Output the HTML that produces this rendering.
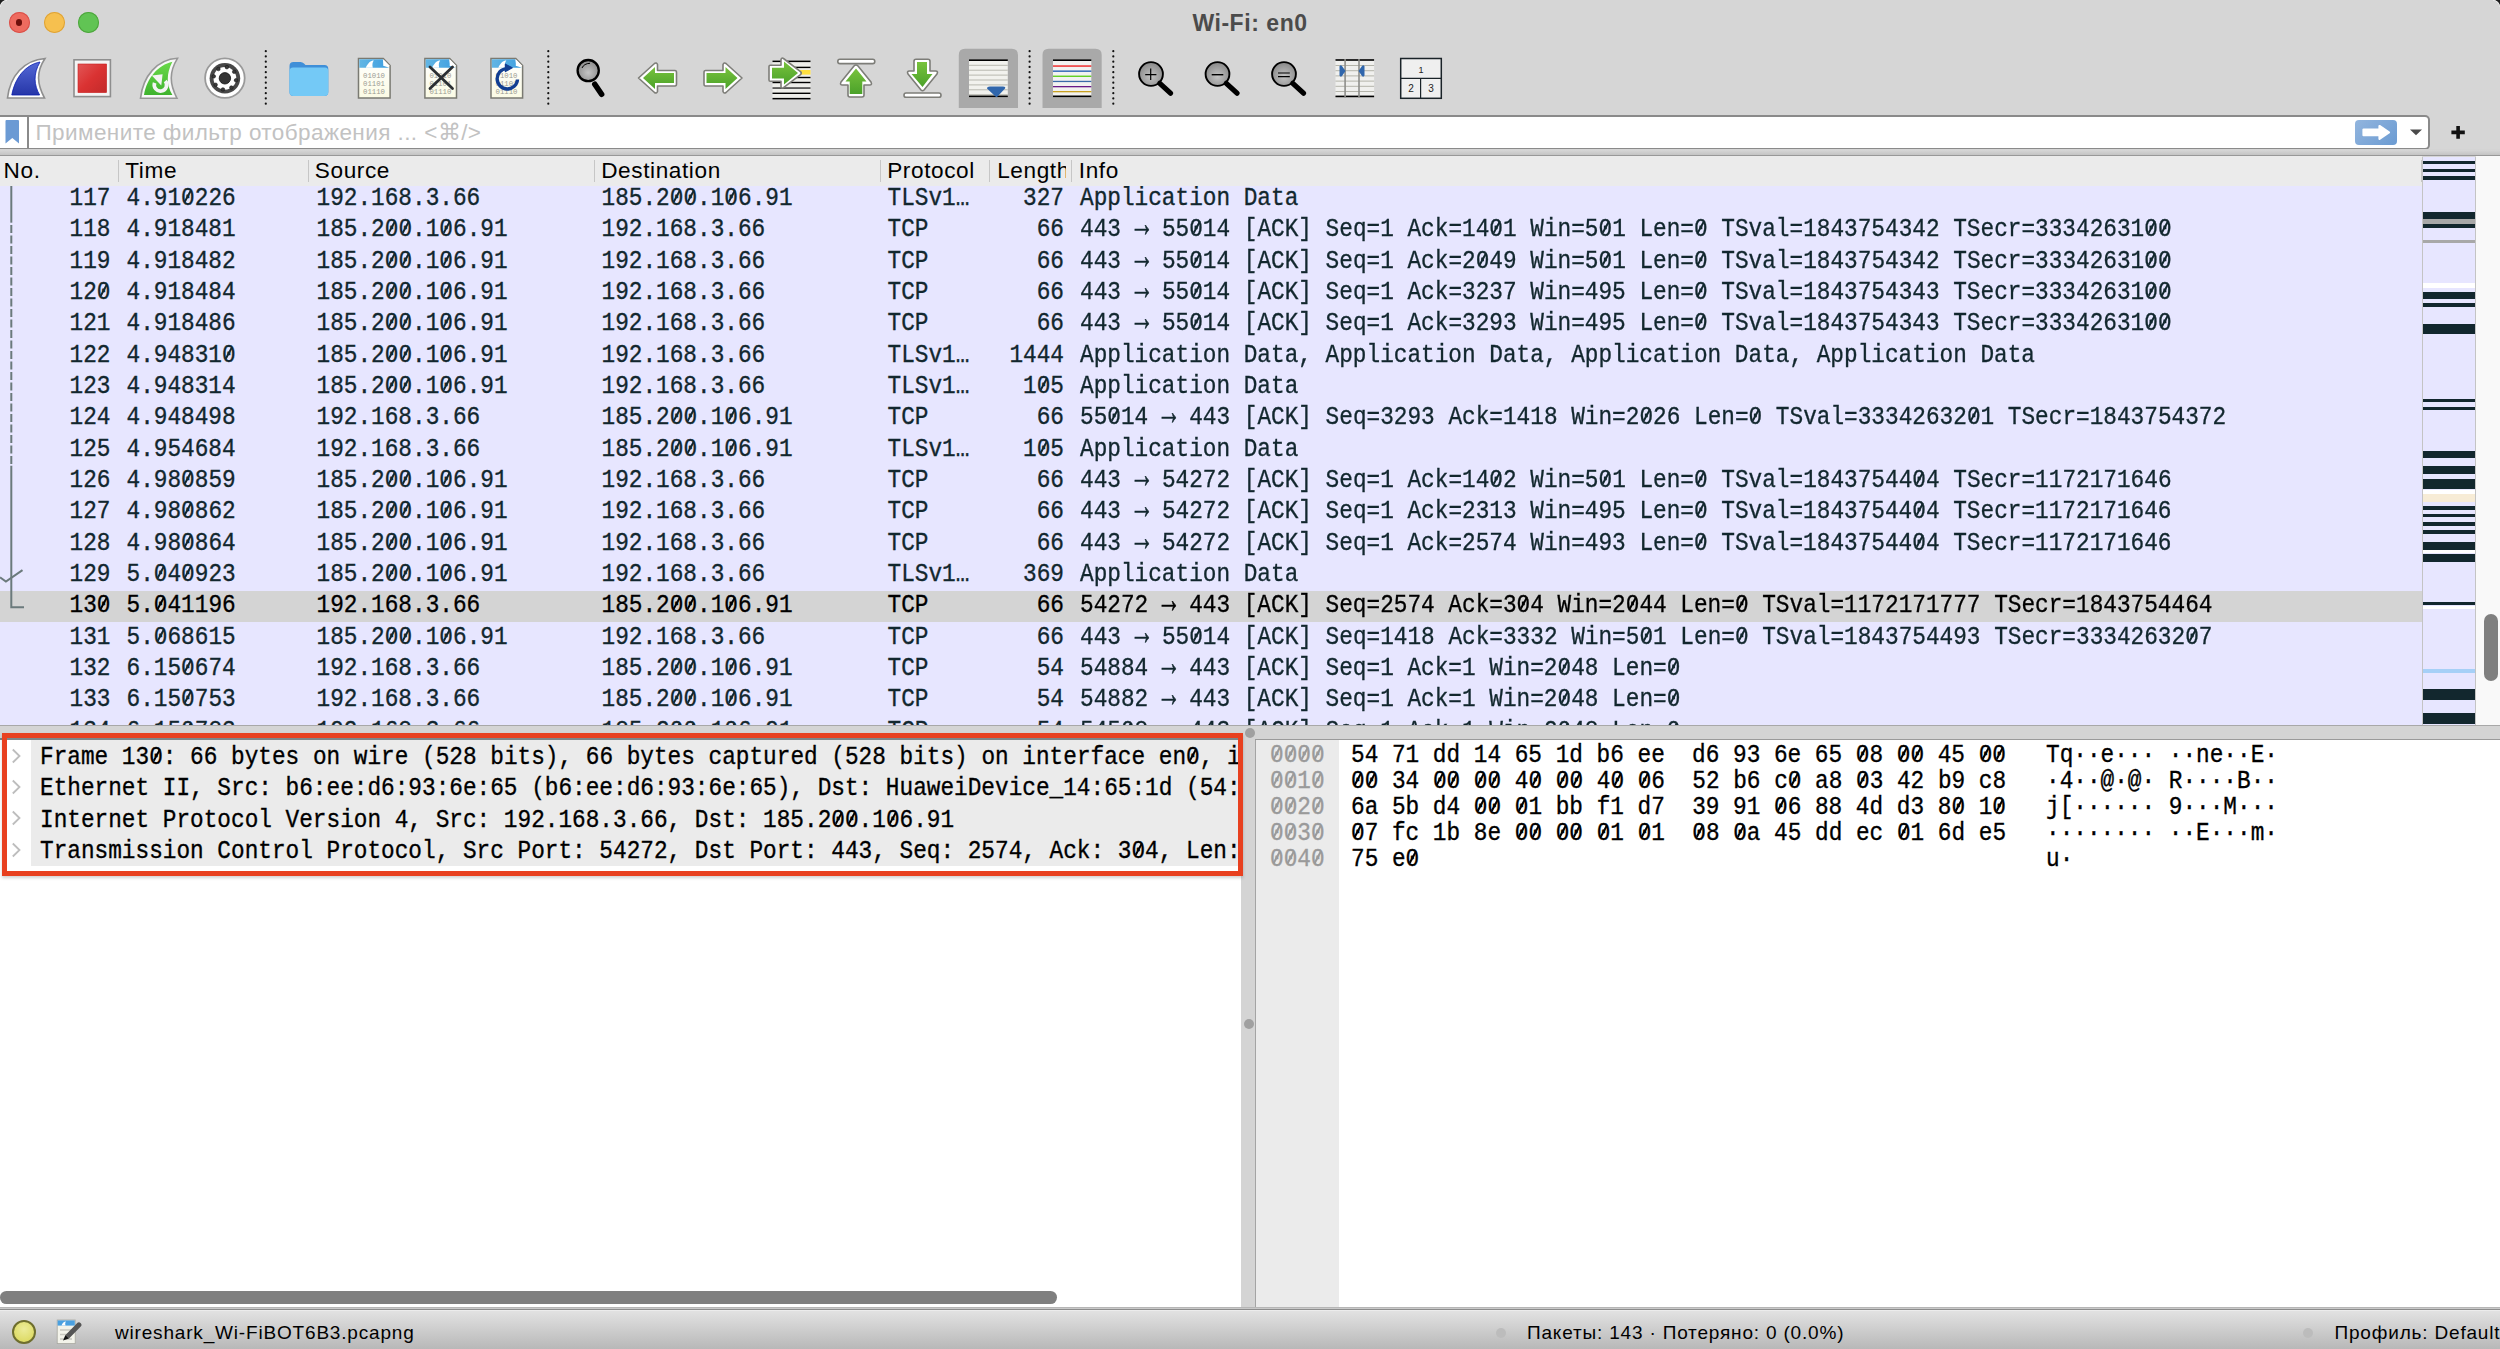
<!DOCTYPE html>
<html><head><meta charset="utf-8">
<style>
*{margin:0;padding:0;box-sizing:border-box}
html,body{width:2500px;height:1349px;overflow:hidden;background:#d6d6d6}
body{position:relative;font-family:"Liberation Sans",sans-serif}
.a{position:absolute}
.m{position:absolute;font-family:"Liberation Mono",monospace;font-size:22.74px;line-height:31px;white-space:pre;color:#12272e;transform:scaleY(1.12);transform-origin:0 21.6px;-webkit-text-stroke:0.3px currentColor}
.hx{line-height:26px;transform-origin:0 19px}
.z{position:relative}
.z::after{content:'';position:absolute;left:6.35px;top:5.4px;width:1.9px;height:11.6px;background:currentColor;transform:rotate(31deg)}
.ar{display:inline-block;transform:translateY(-2.5px) scale(1.05,1.5)}
.h{position:absolute;font-family:"Liberation Sans",sans-serif;font-size:22.6px;line-height:28px;white-space:pre;color:#000;letter-spacing:0.6px}
.sep{position:absolute;top:160px;width:1px;height:22px;background:#c6c6c6}
</style></head><body>

<div class="a" style="left:0;top:0;width:2500px;height:115px;background:#d6d6d6"></div>
<svg class="a" style="left:0;top:0" width="12" height="12"><path d="M0 0 H7 A7 7 0 0 0 0 7 Z" fill="#1e1e1e"/><path d="M7 0.3 A6.7 6.7 0 0 0 0.3 7" fill="none" stroke="#efefef" stroke-width="0.9"/></svg>
<svg class="a" style="left:2488px;top:0" width="12" height="12"><path d="M12 0 H5 A7 7 0 0 1 12 7 Z" fill="#1e1e1e"/><path d="M5 0.3 A6.7 6.7 0 0 1 11.7 7" fill="none" stroke="#efefef" stroke-width="0.9"/></svg>
<div class="a" style="left:1151px;top:7.7px;width:198px;text-align:center;font-weight:bold;font-size:23px;letter-spacing:0.55px;line-height:30px;color:#4b4b4b">Wi-Fi: en0</div>
<div class="a" style="left:8.8px;top:12.2px;width:21px;height:21px;border-radius:50%;background:#ee6b5f;box-shadow:inset 0 0 0 1px #d9504a"></div>
<div class="a" style="left:43.7px;top:12.2px;width:21px;height:21px;border-radius:50%;background:#f6c04f;box-shadow:inset 0 0 0 1px #dea236"></div>
<div class="a" style="left:78.4px;top:12.2px;width:21px;height:21px;border-radius:50%;background:#61c454;box-shadow:inset 0 0 0 1px #4ea43d"></div>
<div class="a" style="left:16px;top:19.2px;width:6.4px;height:6.4px;border-radius:50%;background:#6e100b"></div>
<svg class="a" style="left:0;top:0" width="1460" height="115" viewBox="0 0 1460 115">
<defs>
<linearGradient id="gBlue" x1="0" y1="0" x2="0" y2="1"><stop offset="0" stop-color="#5468d6"/><stop offset="1" stop-color="#2636a8"/></linearGradient>
<linearGradient id="gRed" x1="0" y1="0" x2="1" y2="1"><stop offset="0" stop-color="#e25656"/><stop offset="0.5" stop-color="#da3232"/><stop offset="1" stop-color="#c22a2a"/></linearGradient>
<linearGradient id="gGreen" x1="0" y1="0" x2="0" y2="1"><stop offset="0" stop-color="#6ad94a"/><stop offset="1" stop-color="#3fb32e"/></linearGradient>
<linearGradient id="gArrow" x1="0" y1="0" x2="0" y2="1"><stop offset="0" stop-color="#78c23c"/><stop offset="1" stop-color="#4ba22a"/></linearGradient>
<radialGradient id="gLens" cx="0.5" cy="0.6" r="0.6"><stop offset="0" stop-color="#c4c4c4"/><stop offset="1" stop-color="#888"/></radialGradient>
<linearGradient id="gFile" x1="0" y1="0" x2="0" y2="1"><stop offset="0" stop-color="#ffffff"/><stop offset="1" stop-color="#fbfbe4"/></linearGradient>
<linearGradient id="gBand" x1="0" y1="0" x2="1" y2="0"><stop offset="0" stop-color="#62b6e4"/><stop offset="1" stop-color="#3d9ee0"/></linearGradient>
</defs>
<path d="M7.5 98 C10 76 24 60 45 58.5 C36 72 37 84 44.5 98 Z" fill="#fff" stroke="#8e8e8e" stroke-width="1.6"/>
<path d="M11.8 95 C15 78 25 65 40 62 C33 74 34 85 39.6 95 Z" fill="url(#gBlue)" stroke="#0b1fb0" stroke-width="0.8"/>
<rect x="74" y="59.8" width="36.4" height="36.8" fill="#f4f4f4" stroke="#8e8e8e" stroke-width="1.6"/>
<rect x="78" y="64" width="28.6" height="28.6" fill="url(#gRed)" stroke="#c82020" stroke-width="0.6"/>
<path d="M140.5 98.3 C143 76 157 59.5 177.5 58.3 C169 72 169.5 84 177 98.3 Z" fill="#f8f8f8" stroke="#979797" stroke-width="1.6"/>
<path d="M144 95 C147 78 158 65 172.4 61.8 C166 74 166.5 85 172.4 95 Z" fill="url(#gGreen)"/>
<path d="M154.6 82.8 A6.2 6.2 0 1 0 165.3 81" fill="none" stroke="#f4f4f4" stroke-width="3.7"/>
<path d="M151.8 75.5 L162.6 74.2 L161.3 85.5 Z" fill="#f4f4f4"/>
<circle cx="224.9" cy="78.1" r="19.8" fill="#fff" stroke="#9a9a9a" stroke-width="1.8"/>
<circle cx="224.9" cy="78.3" r="15.3" fill="#474747"/>
<circle cx="224.90" cy="78.30" r="11.4" fill="#fff"/>
<circle cx="226.86" cy="67.17" r="1.8" fill="#3a3a3a" stroke="#111" stroke-width="0.5"/>
<circle cx="234.16" cy="71.82" r="1.8" fill="#3a3a3a" stroke="#111" stroke-width="0.5"/>
<circle cx="236.03" cy="80.26" r="1.8" fill="#3a3a3a" stroke="#111" stroke-width="0.5"/>
<circle cx="231.38" cy="87.56" r="1.8" fill="#3a3a3a" stroke="#111" stroke-width="0.5"/>
<circle cx="222.94" cy="89.43" r="1.8" fill="#3a3a3a" stroke="#111" stroke-width="0.5"/>
<circle cx="215.64" cy="84.78" r="1.8" fill="#3a3a3a" stroke="#111" stroke-width="0.5"/>
<circle cx="213.77" cy="76.34" r="1.8" fill="#3a3a3a" stroke="#111" stroke-width="0.5"/>
<circle cx="218.42" cy="69.04" r="1.8" fill="#3a3a3a" stroke="#111" stroke-width="0.5"/>
<circle cx="224.9" cy="78.3" r="5.7" fill="#353535" stroke="#111" stroke-width="0.8"/>
<circle cx="265.8" cy="51.20" r="1.1" fill="#111"/>
<circle cx="265.8" cy="56.45" r="1.1" fill="#111"/>
<circle cx="265.8" cy="61.70" r="1.1" fill="#111"/>
<circle cx="265.8" cy="66.95" r="1.1" fill="#111"/>
<circle cx="265.8" cy="72.20" r="1.1" fill="#111"/>
<circle cx="265.8" cy="77.45" r="1.1" fill="#111"/>
<circle cx="265.8" cy="82.70" r="1.1" fill="#111"/>
<circle cx="265.8" cy="87.95" r="1.1" fill="#111"/>
<circle cx="265.8" cy="93.20" r="1.1" fill="#111"/>
<circle cx="265.8" cy="98.45" r="1.1" fill="#111"/>
<circle cx="265.8" cy="103.70" r="1.1" fill="#111"/>
<circle cx="548.3" cy="51.20" r="1.1" fill="#111"/>
<circle cx="548.3" cy="56.45" r="1.1" fill="#111"/>
<circle cx="548.3" cy="61.70" r="1.1" fill="#111"/>
<circle cx="548.3" cy="66.95" r="1.1" fill="#111"/>
<circle cx="548.3" cy="72.20" r="1.1" fill="#111"/>
<circle cx="548.3" cy="77.45" r="1.1" fill="#111"/>
<circle cx="548.3" cy="82.70" r="1.1" fill="#111"/>
<circle cx="548.3" cy="87.95" r="1.1" fill="#111"/>
<circle cx="548.3" cy="93.20" r="1.1" fill="#111"/>
<circle cx="548.3" cy="98.45" r="1.1" fill="#111"/>
<circle cx="548.3" cy="103.70" r="1.1" fill="#111"/>
<circle cx="1029.6" cy="51.20" r="1.1" fill="#111"/>
<circle cx="1029.6" cy="56.45" r="1.1" fill="#111"/>
<circle cx="1029.6" cy="61.70" r="1.1" fill="#111"/>
<circle cx="1029.6" cy="66.95" r="1.1" fill="#111"/>
<circle cx="1029.6" cy="72.20" r="1.1" fill="#111"/>
<circle cx="1029.6" cy="77.45" r="1.1" fill="#111"/>
<circle cx="1029.6" cy="82.70" r="1.1" fill="#111"/>
<circle cx="1029.6" cy="87.95" r="1.1" fill="#111"/>
<circle cx="1029.6" cy="93.20" r="1.1" fill="#111"/>
<circle cx="1029.6" cy="98.45" r="1.1" fill="#111"/>
<circle cx="1029.6" cy="103.70" r="1.1" fill="#111"/>
<circle cx="1113.3" cy="51.20" r="1.1" fill="#111"/>
<circle cx="1113.3" cy="56.45" r="1.1" fill="#111"/>
<circle cx="1113.3" cy="61.70" r="1.1" fill="#111"/>
<circle cx="1113.3" cy="66.95" r="1.1" fill="#111"/>
<circle cx="1113.3" cy="72.20" r="1.1" fill="#111"/>
<circle cx="1113.3" cy="77.45" r="1.1" fill="#111"/>
<circle cx="1113.3" cy="82.70" r="1.1" fill="#111"/>
<circle cx="1113.3" cy="87.95" r="1.1" fill="#111"/>
<circle cx="1113.3" cy="93.20" r="1.1" fill="#111"/>
<circle cx="1113.3" cy="98.45" r="1.1" fill="#111"/>
<circle cx="1113.3" cy="103.70" r="1.1" fill="#111"/>
<path d="M289.5 66 Q289.5 62 293.5 62 L300.5 62 Q302.5 62 304 63.5 L305.5 65 L324.5 65 Q328.3 65 328.3 69 L328.3 92 Q328.3 96 324.3 96 L293.5 96 Q289.5 96 289.5 92 Z" fill="#3f8fd8"/>
<path d="M289.5 71 Q289.5 67.5 293 67.5 L325 67.5 Q328.3 67.5 328.3 71 L328.3 92 Q328.3 96 324.3 96 L293.5 96 Q289.5 96 289.5 92 Z" fill="#74c9f6"/>
<path d="M358.5 58.5 L383.3 58.5 L390.1 65.5 L390.1 98 L358.5 98 Z" fill="url(#gFile)" stroke="#7a7a72" stroke-width="1.5"/><path d="M359.3 59.3 L382.8 59.3 L384.0 66 L389.3 67.8 L359.3 67.8 Z" fill="url(#gBand)"/><path d="M365.8 67.8 C367.8 63 370.8 60.5 373.8 60.5 C372.3 62.5 372.1 65 372.8 67.8 Z" fill="#fff"/><path d="M383.3 59.2 L389.9 66 L383.3 66 Z" fill="#fff"/><text x="363.0" y="78.3" font-family="Liberation Mono" font-size="7.3" fill="#9a9a92">01010</text><text x="363.0" y="86.1" font-family="Liberation Mono" font-size="7.3" fill="#9a9a92">01101</text><text x="363.0" y="93.9" font-family="Liberation Mono" font-size="7.3" fill="#9a9a92">01110</text>
<path d="M424.9 58.5 L449.7 58.5 L456.5 65.5 L456.5 98 L424.9 98 Z" fill="url(#gFile)" stroke="#7a7a72" stroke-width="1.5"/><path d="M425.7 59.3 L449.2 59.3 L450.4 66 L455.7 67.8 L425.7 67.8 Z" fill="url(#gBand)"/><path d="M432.2 67.8 C434.2 63 437.2 60.5 440.2 60.5 C438.7 62.5 438.5 65 439.2 67.8 Z" fill="#fff"/><path d="M449.7 59.2 L456.3 66 L449.7 66 Z" fill="#fff"/><text x="429.4" y="78.3" font-family="Liberation Mono" font-size="7.3" fill="#9a9a92">01010</text><text x="429.4" y="86.1" font-family="Liberation Mono" font-size="7.3" fill="#9a9a92">01101</text><text x="429.4" y="93.9" font-family="Liberation Mono" font-size="7.3" fill="#9a9a92">01110</text>
<path d="M430 67 L452.5 88.5 M452.5 67 L430 88.5" stroke="#2b2f33" stroke-width="2.8" stroke-linecap="round"/>
<path d="M491.0 58.5 L515.8 58.5 L522.6 65.5 L522.6 98 L491.0 98 Z" fill="url(#gFile)" stroke="#7a7a72" stroke-width="1.5"/><path d="M491.8 59.3 L515.3 59.3 L516.5 66 L521.8 67.8 L491.8 67.8 Z" fill="url(#gBand)"/><path d="M498.3 67.8 C500.3 63 503.3 60.5 506.3 60.5 C504.8 62.5 504.6 65 505.3 67.8 Z" fill="#fff"/><path d="M515.8 59.2 L522.4 66 L515.8 66 Z" fill="#fff"/><text x="495.5" y="78.3" font-family="Liberation Mono" font-size="7.3" fill="#9a9a92">01010</text><text x="495.5" y="86.1" font-family="Liberation Mono" font-size="7.3" fill="#9a9a92">01101</text><text x="495.5" y="93.9" font-family="Liberation Mono" font-size="7.3" fill="#9a9a92">01110</text>
<path d="M506.5 68.6 A10.2 10.2 0 1 0 517.5 79.5" fill="none" stroke="#123f92" stroke-width="3.4"/>
<path d="M505.4 64.2 L512.2 67.8 L505.4 71.6 Z" fill="#123f92" stroke="#123f92" stroke-width="1.2" stroke-linejoin="round"/>
<circle cx="588.2" cy="70.6" r="10.6" fill="url(#gLens)" stroke="#000" stroke-width="2.3"/>
<path d="M582 68 Q584 63.5 590 63.3" fill="none" stroke="#000" stroke-width="1"/>
<path d="M594.8 84.2 L601.6 94.2" stroke="#000" stroke-width="5.6" stroke-linecap="round"/>
<path d="M638.5 78 L654.5 63.5 Q656.5 62 657.5 64.5 L657.5 70.5 L675.0 70.5 Q676.5 70.5 676.5 72.5 L676.5 84 Q676.5 86 675.0 86 L657.5 86 L657.5 91.5 Q656.5 94 654.5 92.5 Z" fill="#fff" stroke="#7d7d78" stroke-width="1.6" stroke-linejoin="round"/><path d="M643.0 78 L655.0 67 L655.0 73 L674.0 73 L674.0 83 L655.0 83 L655.0 89 Z" fill="url(#gArrow)"/>
<g transform="translate(1380.5,0) scale(-1,1)"><path d="M638.5 78 L654.5 63.5 Q656.5 62 657.5 64.5 L657.5 70.5 L675.0 70.5 Q676.5 70.5 676.5 72.5 L676.5 84 Q676.5 86 675.0 86 L657.5 86 L657.5 91.5 Q656.5 94 654.5 92.5 Z" fill="#fff" stroke="#7d7d78" stroke-width="1.6" stroke-linejoin="round"/><path d="M643.0 78 L655.0 67 L655.0 73 L674.0 73 L674.0 83 L655.0 83 L655.0 89 Z" fill="url(#gArrow)"/></g>
<rect x="772.5" y="61" width="38" height="38" fill="#eeeeea"/>
<rect x="772.5" y="60.6" width="38" height="1.5" fill="#000"/>
<rect x="772.5" y="66.7" width="38" height="1.4" fill="#000"/>
<rect x="772.5" y="70.0" width="38" height="4.6" fill="#ffe040"/>
<rect x="772.5" y="76.8" width="38" height="1.4" fill="#000"/>
<rect x="772.5" y="81.8" width="38" height="1.4" fill="#000"/>
<rect x="772.5" y="87.3" width="38" height="1.5" fill="#3a3a3a"/>
<rect x="772.5" y="92.6" width="38" height="1.4" fill="#000"/>
<rect x="772.5" y="97.9" width="38" height="1.5" fill="#000"/>
<path d="M770.2 65.3 L781 65.3 L781 59.5 Q781.5 57.3 783.5 58.5 L800.5 71.6 Q802 73.1 800.5 74.6 L783.5 87.6 Q781.5 88.8 781 86.6 L781 81.3 L770.2 81.3 Q769 81.3 769 80 L769 66.6 Q769 65.3 770.2 65.3 Z" fill="#fff" stroke="#7d7d78" stroke-width="1.6" stroke-linejoin="round"/>
<path d="M772 67.8 L784 67.8 L784 61.6 L798 73.1 L784 84.6 L784 78.6 L772 78.6 Z" fill="url(#gArrow)"/>
<rect x="837.8" y="59.3" width="37" height="4.3" rx="2.1" fill="#fff" stroke="#7d7d78" stroke-width="1.6"/>
<path d="M856 65 Q857 65 858 66 L871 82 Q872.5 85 869.5 85 L864 85 L864 95 Q864 97 862 97 L850 97 Q848 97 848 95 L848 85 L842.5 85 Q839.5 85 841 82 L854 66 Q855 65 856 65 Z" fill="#fff" stroke="#7d7d78" stroke-width="1.6" stroke-linejoin="round"/>
<path d="M856 68.5 L866.5 81.5 L862.3 81.5 L862.3 94 L849.7 94 L849.7 81.5 L845.5 81.5 Z" fill="url(#gArrow)"/>
<rect x="904" y="93" width="37" height="4.3" rx="2.1" fill="#fff" stroke="#7d7d78" stroke-width="1.6"/>
<path d="M916 59.3 L928 59.3 Q930 59.3 930 61.3 L930 71 L935.5 71 Q938.5 71 937 74 L924 90 Q922.5 91.5 921 90 L908 74 Q906.5 71 909.5 71 L914 71 L914 61.3 Q914 59.3 916 59.3 Z" fill="#fff" stroke="#7d7d78" stroke-width="1.6" stroke-linejoin="round"/>
<path d="M917 62 L927 62 L927 74 L932.5 74 L922.5 87 L911.5 74 L917 74 Z" fill="url(#gArrow)"/>
<path d="M958.8 108 L958.8 55 Q958.8 48.8 965.0 48.8 L1011.8 48.8 Q1018.0 48.8 1018.0 55 L1018.0 108 Z" fill="#a9a9a9"/>
<path d="M1042.5 108 L1042.5 55 Q1042.5 48.8 1048.7 48.8 L1095.5 48.8 Q1101.7 48.8 1101.7 55 L1101.7 108 Z" fill="#a9a9a9"/>
<rect x="969" y="60.5" width="38.8" height="35.5" fill="#f2f2ee"/>
<rect x="969" y="64.8" width="38.8" height="1" fill="#b8b8b0"/>
<rect x="969" y="69.7" width="38.8" height="1" fill="#b8b8b0"/>
<rect x="969" y="74.6" width="38.8" height="1" fill="#b8b8b0"/>
<rect x="969" y="79.5" width="38.8" height="1" fill="#b8b8b0"/>
<rect x="969" y="84.4" width="38.8" height="1" fill="#b8b8b0"/>
<rect x="969" y="89.3" width="38.8" height="1" fill="#b8b8b0"/>
<rect x="969" y="94.2" width="38.8" height="1" fill="#b8b8b0"/>
<rect x="969" y="59.4" width="38.8" height="1.6" fill="#000"/>
<rect x="969" y="95.5" width="38.8" height="1.6" fill="#000"/>
<path d="M987 88.5 Q987 86.5 990 86.5 L1003 86.5 Q1006 86.5 1005 88.5 L997.5 96.5 Q996.5 97.5 995.5 96.5 Z" fill="#3066ac"/>
<rect x="1053" y="60.5" width="38.3" height="35.5" fill="#f2f2f0"/>
<rect x="1053" y="59.4" width="38.3" height="1.6" fill="#000"/>
<rect x="1053" y="95.5" width="38.3" height="1.6" fill="#000"/>
<rect x="1053" y="65.4" width="38.3" height="1.3" fill="#ee1111"/>
<rect x="1053" y="70.5" width="38.3" height="1.3" fill="#1a55b0"/>
<rect x="1053" y="75.6" width="38.3" height="1.3" fill="#55cc11"/>
<rect x="1053" y="80.8" width="38.3" height="1.3" fill="#3a6aa8"/>
<rect x="1053" y="86.0" width="38.3" height="1.3" fill="#6a1a88"/>
<rect x="1053" y="91.0" width="38.3" height="1.3" fill="#c8a020"/>
<circle cx="1151.0" cy="74.0" r="11.9" fill="url(#gLens)" stroke="#000" stroke-width="1.9"/><path d="M1159.8 83.3 L1170.5 93.2" stroke="#000" stroke-width="5.2" stroke-linecap="round"/><path d="M1145.2 74.7 H1156.4 M1150.7 68.4 V80.0" stroke="#000" stroke-width="1.2"/>
<circle cx="1217.5" cy="74.0" r="11.9" fill="url(#gLens)" stroke="#000" stroke-width="1.9"/><path d="M1226.3 83.3 L1237.0 93.2" stroke="#000" stroke-width="5.2" stroke-linecap="round"/><path d="M1211.7 74.7 H1223.3" stroke="#000" stroke-width="1.4"/>
<circle cx="1284.0" cy="74.0" r="11.9" fill="url(#gLens)" stroke="#000" stroke-width="1.9"/><path d="M1292.8 83.3 L1303.5 93.2" stroke="#000" stroke-width="5.2" stroke-linecap="round"/><path d="M1278.0 73.0 H1289.8 M1278.0 76.6 H1289.8" stroke="#000" stroke-width="1.2"/>
<rect x="1335.5" y="60" width="38.6" height="36" fill="#f0f0ee"/>
<rect x="1335.5" y="65.0" width="38.6" height="1" fill="#b4b4aa"/>
<rect x="1335.5" y="70.2" width="38.6" height="1" fill="#b4b4aa"/>
<rect x="1335.5" y="75.4" width="38.6" height="1" fill="#b4b4aa"/>
<rect x="1335.5" y="80.6" width="38.6" height="1" fill="#b4b4aa"/>
<rect x="1335.5" y="85.8" width="38.6" height="1" fill="#b4b4aa"/>
<rect x="1335.5" y="91.0" width="38.6" height="1" fill="#b4b4aa"/>
<rect x="1335.5" y="96.2" width="38.6" height="1" fill="#b4b4aa"/>
<rect x="1335.5" y="59.2" width="38.6" height="1.6" fill="#000"/>
<rect x="1335.5" y="95.6" width="38.6" height="1.6" fill="#000"/>
<rect x="1344.3" y="59" width="1.6" height="38.5" fill="#8e8e8a"/>
<rect x="1358.2" y="59" width="1.6" height="38.5" fill="#8e8e8a"/>
<path d="M1339.5 66.5 Q1340.5 64.5 1342 66 L1345.5 71 L1342 76 Q1340.5 77.5 1339.5 75.5 Z" fill="#3066ac"/>
<path d="M1364.5 66.5 Q1363.5 64.5 1362 66 L1358.5 71 L1362 76 Q1363.5 77.5 1364.5 75.5 Z" fill="#3066ac"/>
<rect x="1400.7" y="58.5" width="40.6" height="39.8" fill="#efefef" stroke="#1a2328" stroke-width="1.5"/>
<path d="M1400.7 78.3 H1441.3 M1420.6 78.3 V98.3" stroke="#1a2328" stroke-width="1.2"/>
<text x="1421" y="72.5" font-family="Liberation Sans" font-size="9" fill="#222" text-anchor="middle">1</text>
<text x="1411" y="92" font-family="Liberation Sans" font-size="10" fill="#222" text-anchor="middle">2</text>
<text x="1431" y="92" font-family="Liberation Sans" font-size="10" fill="#222" text-anchor="middle">3</text>
</svg>
<div class="a" style="left:0;top:114.8px;width:2430px;height:35.3px;background:#fff;border:2px solid #8a8a8a;border-left:none;border-radius:0 5px 5px 0"></div>
<div class="a" style="left:27px;top:116px;width:2px;height:32px;background:#8a8a8a"></div>
<svg class="a" style="left:0;top:115px" width="30" height="34"><path d="M5.5 6 Q5.5 5 6.5 5 L18 5 Q19 5 19 6 L19 28.5 L12.3 23 L5.5 28.5 Z" fill="#6b9ad4"/></svg>
<div class="a" style="left:35.5px;top:118px;font-size:22.5px;letter-spacing:0.42px;line-height:30px;color:#c2c2c2;white-space:pre">Примените фильтр отображения ... &lt;⌘/&gt;</div>
<div class="a" style="left:2355px;top:120px;width:42px;height:24.6px;border-radius:4px;background:linear-gradient(135deg,#92b5de,#6b9bd2)"></div>
<svg class="a" style="left:2355px;top:120px" width="42" height="25"><path d="M8.5 9.6 H24.5 V6 L34 12.4 L24.5 18.8 V15.2 H8.5 Z" fill="#fff" stroke="#fff" stroke-width="2.2" stroke-linejoin="round"/></svg>
<svg class="a" style="left:2408px;top:127px" width="16" height="10"><path d="M2 2.5 H14 L8 8.3 Z" fill="#4a4a4a"/></svg>
<svg class="a" style="left:2448px;top:124px" width="20" height="18"><path d="M3.4 8.4 H16.8 M10.1 2 V14.8" stroke="#111" stroke-width="3.6"/></svg>
<div class="a" style="left:0;top:149px;width:2500px;height:6px;background:#d4d4d4"></div>
<div class="a" style="left:0;top:150px;width:2500px;height:5px;background:linear-gradient(#d6d6d6,#c4c4c4)"></div>
<div class="a" style="left:0;top:154.8px;width:2500px;height:1.3px;background:#989898"></div>
<div class="a" style="left:0;top:155px;width:2422px;height:570px;background:#e7e6ff;overflow:hidden">
<div class="a" style="left:0;top:436.29px;width:2422px;height:31px;background:#d4d4d4"></div>
<div class="m" style="top:29.00px;color:#12272e;left:0;width:110.5px;text-align:right">117</div>
<div class="m" style="top:29.00px;color:#12272e;left:126.5px">4.91<span class="z">0</span>226</div>
<div class="m" style="top:29.00px;color:#12272e;left:316.5px">192.168.3.66</div>
<div class="m" style="top:29.00px;color:#12272e;left:601.5px">185.2<span class="z">0</span><span class="z">0</span>.1<span class="z">0</span>6.91</div>
<div class="m" style="top:29.00px;color:#12272e;left:887.5px">TLSv1…</div>
<div class="m" style="top:29.00px;color:#12272e;left:0;width:1064.0px;text-align:right">327</div>
<div class="m" style="top:29.00px;color:#12272e;left:1080.0px">Application Data</div>
<div class="m" style="top:60.33px;color:#12272e;left:0;width:110.5px;text-align:right">118</div>
<div class="m" style="top:60.33px;color:#12272e;left:126.5px">4.918481</div>
<div class="m" style="top:60.33px;color:#12272e;left:316.5px">185.2<span class="z">0</span><span class="z">0</span>.1<span class="z">0</span>6.91</div>
<div class="m" style="top:60.33px;color:#12272e;left:601.5px">192.168.3.66</div>
<div class="m" style="top:60.33px;color:#12272e;left:887.5px">TCP</div>
<div class="m" style="top:60.33px;color:#12272e;left:0;width:1064.0px;text-align:right">66</div>
<div class="m" style="top:60.33px;color:#12272e;left:1080.0px">443 <span class="ar">→</span> 55<span class="z">0</span>14 [ACK] Seq=1 Ack=14<span class="z">0</span>1 Win=5<span class="z">0</span>1 Len=<span class="z">0</span> TSval=1843754342 TSecr=33342631<span class="z">0</span><span class="z">0</span></div>
<div class="m" style="top:91.66px;color:#12272e;left:0;width:110.5px;text-align:right">119</div>
<div class="m" style="top:91.66px;color:#12272e;left:126.5px">4.918482</div>
<div class="m" style="top:91.66px;color:#12272e;left:316.5px">185.2<span class="z">0</span><span class="z">0</span>.1<span class="z">0</span>6.91</div>
<div class="m" style="top:91.66px;color:#12272e;left:601.5px">192.168.3.66</div>
<div class="m" style="top:91.66px;color:#12272e;left:887.5px">TCP</div>
<div class="m" style="top:91.66px;color:#12272e;left:0;width:1064.0px;text-align:right">66</div>
<div class="m" style="top:91.66px;color:#12272e;left:1080.0px">443 <span class="ar">→</span> 55<span class="z">0</span>14 [ACK] Seq=1 Ack=2<span class="z">0</span>49 Win=5<span class="z">0</span>1 Len=<span class="z">0</span> TSval=1843754342 TSecr=33342631<span class="z">0</span><span class="z">0</span></div>
<div class="m" style="top:122.99px;color:#12272e;left:0;width:110.5px;text-align:right">12<span class="z">0</span></div>
<div class="m" style="top:122.99px;color:#12272e;left:126.5px">4.918484</div>
<div class="m" style="top:122.99px;color:#12272e;left:316.5px">185.2<span class="z">0</span><span class="z">0</span>.1<span class="z">0</span>6.91</div>
<div class="m" style="top:122.99px;color:#12272e;left:601.5px">192.168.3.66</div>
<div class="m" style="top:122.99px;color:#12272e;left:887.5px">TCP</div>
<div class="m" style="top:122.99px;color:#12272e;left:0;width:1064.0px;text-align:right">66</div>
<div class="m" style="top:122.99px;color:#12272e;left:1080.0px">443 <span class="ar">→</span> 55<span class="z">0</span>14 [ACK] Seq=1 Ack=3237 Win=495 Len=<span class="z">0</span> TSval=1843754343 TSecr=33342631<span class="z">0</span><span class="z">0</span></div>
<div class="m" style="top:154.32px;color:#12272e;left:0;width:110.5px;text-align:right">121</div>
<div class="m" style="top:154.32px;color:#12272e;left:126.5px">4.918486</div>
<div class="m" style="top:154.32px;color:#12272e;left:316.5px">185.2<span class="z">0</span><span class="z">0</span>.1<span class="z">0</span>6.91</div>
<div class="m" style="top:154.32px;color:#12272e;left:601.5px">192.168.3.66</div>
<div class="m" style="top:154.32px;color:#12272e;left:887.5px">TCP</div>
<div class="m" style="top:154.32px;color:#12272e;left:0;width:1064.0px;text-align:right">66</div>
<div class="m" style="top:154.32px;color:#12272e;left:1080.0px">443 <span class="ar">→</span> 55<span class="z">0</span>14 [ACK] Seq=1 Ack=3293 Win=495 Len=<span class="z">0</span> TSval=1843754343 TSecr=33342631<span class="z">0</span><span class="z">0</span></div>
<div class="m" style="top:185.65px;color:#12272e;left:0;width:110.5px;text-align:right">122</div>
<div class="m" style="top:185.65px;color:#12272e;left:126.5px">4.94831<span class="z">0</span></div>
<div class="m" style="top:185.65px;color:#12272e;left:316.5px">185.2<span class="z">0</span><span class="z">0</span>.1<span class="z">0</span>6.91</div>
<div class="m" style="top:185.65px;color:#12272e;left:601.5px">192.168.3.66</div>
<div class="m" style="top:185.65px;color:#12272e;left:887.5px">TLSv1…</div>
<div class="m" style="top:185.65px;color:#12272e;left:0;width:1064.0px;text-align:right">1444</div>
<div class="m" style="top:185.65px;color:#12272e;left:1080.0px">Application Data, Application Data, Application Data, Application Data</div>
<div class="m" style="top:216.98px;color:#12272e;left:0;width:110.5px;text-align:right">123</div>
<div class="m" style="top:216.98px;color:#12272e;left:126.5px">4.948314</div>
<div class="m" style="top:216.98px;color:#12272e;left:316.5px">185.2<span class="z">0</span><span class="z">0</span>.1<span class="z">0</span>6.91</div>
<div class="m" style="top:216.98px;color:#12272e;left:601.5px">192.168.3.66</div>
<div class="m" style="top:216.98px;color:#12272e;left:887.5px">TLSv1…</div>
<div class="m" style="top:216.98px;color:#12272e;left:0;width:1064.0px;text-align:right">1<span class="z">0</span>5</div>
<div class="m" style="top:216.98px;color:#12272e;left:1080.0px">Application Data</div>
<div class="m" style="top:248.31px;color:#12272e;left:0;width:110.5px;text-align:right">124</div>
<div class="m" style="top:248.31px;color:#12272e;left:126.5px">4.948498</div>
<div class="m" style="top:248.31px;color:#12272e;left:316.5px">192.168.3.66</div>
<div class="m" style="top:248.31px;color:#12272e;left:601.5px">185.2<span class="z">0</span><span class="z">0</span>.1<span class="z">0</span>6.91</div>
<div class="m" style="top:248.31px;color:#12272e;left:887.5px">TCP</div>
<div class="m" style="top:248.31px;color:#12272e;left:0;width:1064.0px;text-align:right">66</div>
<div class="m" style="top:248.31px;color:#12272e;left:1080.0px">55<span class="z">0</span>14 <span class="ar">→</span> 443 [ACK] Seq=3293 Ack=1418 Win=2<span class="z">0</span>26 Len=<span class="z">0</span> TSval=33342632<span class="z">0</span>1 TSecr=1843754372</div>
<div class="m" style="top:279.64px;color:#12272e;left:0;width:110.5px;text-align:right">125</div>
<div class="m" style="top:279.64px;color:#12272e;left:126.5px">4.954684</div>
<div class="m" style="top:279.64px;color:#12272e;left:316.5px">192.168.3.66</div>
<div class="m" style="top:279.64px;color:#12272e;left:601.5px">185.2<span class="z">0</span><span class="z">0</span>.1<span class="z">0</span>6.91</div>
<div class="m" style="top:279.64px;color:#12272e;left:887.5px">TLSv1…</div>
<div class="m" style="top:279.64px;color:#12272e;left:0;width:1064.0px;text-align:right">1<span class="z">0</span>5</div>
<div class="m" style="top:279.64px;color:#12272e;left:1080.0px">Application Data</div>
<div class="m" style="top:310.97px;color:#12272e;left:0;width:110.5px;text-align:right">126</div>
<div class="m" style="top:310.97px;color:#12272e;left:126.5px">4.98<span class="z">0</span>859</div>
<div class="m" style="top:310.97px;color:#12272e;left:316.5px">185.2<span class="z">0</span><span class="z">0</span>.1<span class="z">0</span>6.91</div>
<div class="m" style="top:310.97px;color:#12272e;left:601.5px">192.168.3.66</div>
<div class="m" style="top:310.97px;color:#12272e;left:887.5px">TCP</div>
<div class="m" style="top:310.97px;color:#12272e;left:0;width:1064.0px;text-align:right">66</div>
<div class="m" style="top:310.97px;color:#12272e;left:1080.0px">443 <span class="ar">→</span> 54272 [ACK] Seq=1 Ack=14<span class="z">0</span>2 Win=5<span class="z">0</span>1 Len=<span class="z">0</span> TSval=18437544<span class="z">0</span>4 TSecr=1172171646</div>
<div class="m" style="top:342.30px;color:#12272e;left:0;width:110.5px;text-align:right">127</div>
<div class="m" style="top:342.30px;color:#12272e;left:126.5px">4.98<span class="z">0</span>862</div>
<div class="m" style="top:342.30px;color:#12272e;left:316.5px">185.2<span class="z">0</span><span class="z">0</span>.1<span class="z">0</span>6.91</div>
<div class="m" style="top:342.30px;color:#12272e;left:601.5px">192.168.3.66</div>
<div class="m" style="top:342.30px;color:#12272e;left:887.5px">TCP</div>
<div class="m" style="top:342.30px;color:#12272e;left:0;width:1064.0px;text-align:right">66</div>
<div class="m" style="top:342.30px;color:#12272e;left:1080.0px">443 <span class="ar">→</span> 54272 [ACK] Seq=1 Ack=2313 Win=495 Len=<span class="z">0</span> TSval=18437544<span class="z">0</span>4 TSecr=1172171646</div>
<div class="m" style="top:373.63px;color:#12272e;left:0;width:110.5px;text-align:right">128</div>
<div class="m" style="top:373.63px;color:#12272e;left:126.5px">4.98<span class="z">0</span>864</div>
<div class="m" style="top:373.63px;color:#12272e;left:316.5px">185.2<span class="z">0</span><span class="z">0</span>.1<span class="z">0</span>6.91</div>
<div class="m" style="top:373.63px;color:#12272e;left:601.5px">192.168.3.66</div>
<div class="m" style="top:373.63px;color:#12272e;left:887.5px">TCP</div>
<div class="m" style="top:373.63px;color:#12272e;left:0;width:1064.0px;text-align:right">66</div>
<div class="m" style="top:373.63px;color:#12272e;left:1080.0px">443 <span class="ar">→</span> 54272 [ACK] Seq=1 Ack=2574 Win=493 Len=<span class="z">0</span> TSval=18437544<span class="z">0</span>4 TSecr=1172171646</div>
<div class="m" style="top:404.96px;color:#12272e;left:0;width:110.5px;text-align:right">129</div>
<div class="m" style="top:404.96px;color:#12272e;left:126.5px">5.<span class="z">0</span>4<span class="z">0</span>923</div>
<div class="m" style="top:404.96px;color:#12272e;left:316.5px">185.2<span class="z">0</span><span class="z">0</span>.1<span class="z">0</span>6.91</div>
<div class="m" style="top:404.96px;color:#12272e;left:601.5px">192.168.3.66</div>
<div class="m" style="top:404.96px;color:#12272e;left:887.5px">TLSv1…</div>
<div class="m" style="top:404.96px;color:#12272e;left:0;width:1064.0px;text-align:right">369</div>
<div class="m" style="top:404.96px;color:#12272e;left:1080.0px">Application Data</div>
<div class="m" style="top:436.29px;color:#000;left:0;width:110.5px;text-align:right">13<span class="z">0</span></div>
<div class="m" style="top:436.29px;color:#000;left:126.5px">5.<span class="z">0</span>41196</div>
<div class="m" style="top:436.29px;color:#000;left:316.5px">192.168.3.66</div>
<div class="m" style="top:436.29px;color:#000;left:601.5px">185.2<span class="z">0</span><span class="z">0</span>.1<span class="z">0</span>6.91</div>
<div class="m" style="top:436.29px;color:#000;left:887.5px">TCP</div>
<div class="m" style="top:436.29px;color:#000;left:0;width:1064.0px;text-align:right">66</div>
<div class="m" style="top:436.29px;color:#000;left:1080.0px">54272 <span class="ar">→</span> 443 [ACK] Seq=2574 Ack=3<span class="z">0</span>4 Win=2<span class="z">0</span>44 Len=<span class="z">0</span> TSval=1172171777 TSecr=1843754464</div>
<div class="m" style="top:467.62px;color:#12272e;left:0;width:110.5px;text-align:right">131</div>
<div class="m" style="top:467.62px;color:#12272e;left:126.5px">5.<span class="z">0</span>68615</div>
<div class="m" style="top:467.62px;color:#12272e;left:316.5px">185.2<span class="z">0</span><span class="z">0</span>.1<span class="z">0</span>6.91</div>
<div class="m" style="top:467.62px;color:#12272e;left:601.5px">192.168.3.66</div>
<div class="m" style="top:467.62px;color:#12272e;left:887.5px">TCP</div>
<div class="m" style="top:467.62px;color:#12272e;left:0;width:1064.0px;text-align:right">66</div>
<div class="m" style="top:467.62px;color:#12272e;left:1080.0px">443 <span class="ar">→</span> 55<span class="z">0</span>14 [ACK] Seq=1418 Ack=3332 Win=5<span class="z">0</span>1 Len=<span class="z">0</span> TSval=1843754493 TSecr=33342632<span class="z">0</span>7</div>
<div class="m" style="top:498.95px;color:#12272e;left:0;width:110.5px;text-align:right">132</div>
<div class="m" style="top:498.95px;color:#12272e;left:126.5px">6.15<span class="z">0</span>674</div>
<div class="m" style="top:498.95px;color:#12272e;left:316.5px">192.168.3.66</div>
<div class="m" style="top:498.95px;color:#12272e;left:601.5px">185.2<span class="z">0</span><span class="z">0</span>.1<span class="z">0</span>6.91</div>
<div class="m" style="top:498.95px;color:#12272e;left:887.5px">TCP</div>
<div class="m" style="top:498.95px;color:#12272e;left:0;width:1064.0px;text-align:right">54</div>
<div class="m" style="top:498.95px;color:#12272e;left:1080.0px">54884 <span class="ar">→</span> 443 [ACK] Seq=1 Ack=1 Win=2<span class="z">0</span>48 Len=<span class="z">0</span></div>
<div class="m" style="top:530.28px;color:#12272e;left:0;width:110.5px;text-align:right">133</div>
<div class="m" style="top:530.28px;color:#12272e;left:126.5px">6.15<span class="z">0</span>753</div>
<div class="m" style="top:530.28px;color:#12272e;left:316.5px">192.168.3.66</div>
<div class="m" style="top:530.28px;color:#12272e;left:601.5px">185.2<span class="z">0</span><span class="z">0</span>.1<span class="z">0</span>6.91</div>
<div class="m" style="top:530.28px;color:#12272e;left:887.5px">TCP</div>
<div class="m" style="top:530.28px;color:#12272e;left:0;width:1064.0px;text-align:right">54</div>
<div class="m" style="top:530.28px;color:#12272e;left:1080.0px">54882 <span class="ar">→</span> 443 [ACK] Seq=1 Ack=1 Win=2<span class="z">0</span>48 Len=<span class="z">0</span></div>
<div class="m" style="top:561.61px;color:#12272e;left:0;width:110.5px;text-align:right">134</div>
<div class="m" style="top:561.61px;color:#12272e;left:126.5px">6.15<span class="z">0</span>783</div>
<div class="m" style="top:561.61px;color:#12272e;left:316.5px">192.168.3.66</div>
<div class="m" style="top:561.61px;color:#12272e;left:601.5px">185.2<span class="z">0</span><span class="z">0</span>.1<span class="z">0</span>6.91</div>
<div class="m" style="top:561.61px;color:#12272e;left:887.5px">TCP</div>
<div class="m" style="top:561.61px;color:#12272e;left:0;width:1064.0px;text-align:right">54</div>
<div class="m" style="top:561.61px;color:#12272e;left:1080.0px">545<span class="z">0</span>8 <span class="ar">→</span> 443 [ACK] Seq=1 Ack=1 Win=2<span class="z">0</span>48 Len=<span class="z">0</span></div>
<svg class="a" style="left:0;top:0" width="40" height="570">
<path d="M11.3 31 V67.7" stroke="#6b7a7c" stroke-width="2"/>
<path d="M11.3 70 V310" stroke="#6b7a7c" stroke-width="2" stroke-dasharray="8 2.5"/>
<path d="M11.3 310.8 V452.3 H24" fill="none" stroke="#6b7a7c" stroke-width="2"/>
<path d="M0 422.4 L5.9 426.5 L22.5 415.2" fill="none" stroke="#6b7a7c" stroke-width="2"/>
</svg>
</div>
<div class="a" style="left:0;top:155px;width:2422px;height:31px;background:#ebebeb"></div>
<div class="a" style="left:0;top:154.8px;width:2500px;height:1.3px;background:#989898"></div>
<div class="h" style="left:3.6px;top:157px">No.</div>
<div class="h" style="left:125.3px;top:157px">Time</div>
<div class="h" style="left:314.8px;top:157px">Source</div>
<div class="h" style="left:601.2px;top:157px">Destination</div>
<div class="h" style="left:887.2px;top:157px">Protocol</div>
<div class="h" style="left:997.2px;top:157px">Length</div>
<div class="h" style="left:1078.8px;top:157px">Info</div>
<div class="a" style="left:1066px;top:156px;width:10px;height:30px;background:#ebebeb"></div>
<div class="sep" style="left:117.6px"></div>
<div class="sep" style="left:307.6px"></div>
<div class="sep" style="left:593.5px"></div>
<div class="sep" style="left:879.7px"></div>
<div class="sep" style="left:989.1px"></div>
<div class="sep" style="left:1071.1px"></div>
<div class="sep" style="left:2421.2px"></div>
<div class="a" style="left:2421.5px;top:157px;width:54px;height:568px;background:#e7e6ff;border-left:1px solid #c4c4c4;border-right:1px solid #c4c4c4"></div>
<div class="a" style="left:2422.5px;top:160.7px;width:52px;height:3.1px;background:#12272e"></div>
<div class="a" style="left:2422.5px;top:168.7px;width:52px;height:3.1px;background:#12272e"></div>
<div class="a" style="left:2422.5px;top:176.2px;width:52px;height:3.4px;background:#12272e"></div>
<div class="a" style="left:2422.5px;top:212.2px;width:52px;height:7.1px;background:#12272e"></div>
<div class="a" style="left:2422.5px;top:219.3px;width:52px;height:4.7px;background:#a8a8a8"></div>
<div class="a" style="left:2422.5px;top:224.0px;width:52px;height:3.8px;background:#12272e"></div>
<div class="a" style="left:2422.5px;top:239.6px;width:52px;height:3.7px;background:#a8a8a8"></div>
<div class="a" style="left:2422.5px;top:282.9px;width:52px;height:4.9px;background:#ffffff"></div>
<div class="a" style="left:2422.5px;top:292.2px;width:52px;height:6.7px;background:#12272e"></div>
<div class="a" style="left:2422.5px;top:303.3px;width:52px;height:3.8px;background:#12272e"></div>
<div class="a" style="left:2422.5px;top:324.0px;width:52px;height:10.4px;background:#12272e"></div>
<div class="a" style="left:2422.5px;top:398.9px;width:52px;height:2.9px;background:#12272e"></div>
<div class="a" style="left:2422.5px;top:406.7px;width:52px;height:3.3px;background:#12272e"></div>
<div class="a" style="left:2422.5px;top:450.7px;width:52px;height:7.1px;background:#12272e"></div>
<div class="a" style="left:2422.5px;top:466.2px;width:52px;height:7.6px;background:#12272e"></div>
<div class="a" style="left:2422.5px;top:478.9px;width:52px;height:10.0px;background:#12272e"></div>
<div class="a" style="left:2422.5px;top:490.0px;width:52px;height:4.0px;background:#ffffff"></div>
<div class="a" style="left:2422.5px;top:494.0px;width:52px;height:8.2px;background:#f7ecd6"></div>
<div class="a" style="left:2422.5px;top:506.2px;width:52px;height:3.4px;background:#12272e"></div>
<div class="a" style="left:2422.5px;top:514.0px;width:52px;height:3.1px;background:#12272e"></div>
<div class="a" style="left:2422.5px;top:522.2px;width:52px;height:3.6px;background:#12272e"></div>
<div class="a" style="left:2422.5px;top:530.0px;width:52px;height:3.8px;background:#12272e"></div>
<div class="a" style="left:2422.5px;top:542.2px;width:52px;height:7.4px;background:#12272e"></div>
<div class="a" style="left:2422.5px;top:550.0px;width:52px;height:3.3px;background:#ffffff"></div>
<div class="a" style="left:2422.5px;top:554.0px;width:52px;height:7.8px;background:#12272e"></div>
<div class="a" style="left:2422.5px;top:601.6px;width:52px;height:3.3px;background:#12272e"></div>
<div class="a" style="left:2422.5px;top:605.6px;width:52px;height:3.3px;background:#ffffff"></div>
<div class="a" style="left:2422.5px;top:668.9px;width:52px;height:3.8px;background:#a6d0f7"></div>
<div class="a" style="left:2422.5px;top:688.9px;width:52px;height:10.7px;background:#12272e"></div>
<div class="a" style="left:2422.5px;top:712.9px;width:52px;height:10.7px;background:#12272e"></div>
<div class="a" style="left:2476px;top:156px;width:24px;height:569px;background:#f9f9f9"></div>
<div class="a" style="left:2484.4px;top:614.4px;width:13.4px;height:66.6px;border-radius:7px;background:#7f7f7f"></div>
<div class="a" style="left:0;top:725px;width:2500px;height:15px;background:#d4d4d4"></div>
<div class="a" style="left:0;top:724.5px;width:2500px;height:1px;background:#a8a8a8"></div>
<div class="a" style="left:1244.8px;top:727.9px;width:10px;height:10px;border-radius:50%;background:#a0a0a0"></div>
<div class="a" style="left:0;top:738px;width:1243px;height:570px;background:#fff"></div>
<div class="a" style="left:0;top:738px;width:1243px;height:2px;background:#7e8587"></div>
<div class="a" style="left:31px;top:740px;width:1212px;height:125.7px;background:#ebebeb"></div>
<div class="a" style="left:0;top:740px;width:1238px;height:560px;overflow:hidden">
<div class="m" style="left:40px;top:3.00px;color:#000">Frame 13<span class="z">0</span>: 66 bytes on wire (528 bits), 66 bytes captured (528 bits) on interface en<span class="z">0</span>, i</div>
<svg class="a" style="left:10px;top:6.60px" width="14" height="20"><path d="M2.8 2.5 L9.5 9 L2.8 15.5" fill="none" stroke="#bdbdbd" stroke-width="1.8"/></svg>
<div class="m" style="left:40px;top:34.33px;color:#000">Ethernet II, Src: b6:ee:d6:93:6e:65 (b6:ee:d6:93:6e:65), Dst: HuaweiDevice_14:65:1d (54:</div>
<svg class="a" style="left:10px;top:37.93px" width="14" height="20"><path d="M2.8 2.5 L9.5 9 L2.8 15.5" fill="none" stroke="#bdbdbd" stroke-width="1.8"/></svg>
<div class="m" style="left:40px;top:65.66px;color:#000">Internet Protocol Version 4, Src: 192.168.3.66, Dst: 185.2<span class="z">0</span><span class="z">0</span>.1<span class="z">0</span>6.91</div>
<svg class="a" style="left:10px;top:69.26px" width="14" height="20"><path d="M2.8 2.5 L9.5 9 L2.8 15.5" fill="none" stroke="#bdbdbd" stroke-width="1.8"/></svg>
<div class="m" style="left:40px;top:96.99px;color:#000">Transmission Control Protocol, Src Port: 54272, Dst Port: 443, Seq: 2574, Ack: 3<span class="z">0</span>4, Len:</div>
<svg class="a" style="left:10px;top:100.59px" width="14" height="20"><path d="M2.8 2.5 L9.5 9 L2.8 15.5" fill="none" stroke="#bdbdbd" stroke-width="1.8"/></svg>
</div>
<div class="a" style="left:1241px;top:738px;width:14.2px;height:569px;background:#d4d4d4"></div>
<div class="a" style="left:1244.3px;top:1019px;width:10px;height:10px;border-radius:50%;background:#a0a0a0"></div>
<div class="a" style="left:2px;top:733px;width:1241px;height:143px;border:5px solid #e8401f;box-shadow:0 2px 3px rgba(0,0,0,0.18)"></div>
<div class="a" style="left:0;top:1291px;width:1057px;height:12.8px;border-radius:6.4px;background:#7f7f7f"></div>
<div class="a" style="left:1255.2px;top:738.5px;width:1244.8px;height:568.5px;background:#fff"></div>
<div class="a" style="left:1256.4px;top:739.8px;width:82.4px;height:567px;background:#ebebeb"></div>
<div class="a" style="left:1255.2px;top:738.5px;width:1.2px;height:568.5px;background:#a4a4a4"></div>
<div class="a" style="left:1255.2px;top:738.5px;width:1244.8px;height:1.3px;background:#9a9a9a"></div>
<div class="m hx" style="left:1270px;top:742.50px;color:#9a9a9a"><span class="z">0</span><span class="z">0</span><span class="z">0</span><span class="z">0</span></div>
<div class="m hx" style="left:1351px;top:742.50px;color:#000">54 71 dd 14 65 1d b6 ee  d6 93 6e 65 <span class="z">0</span>8 <span class="z">0</span><span class="z">0</span> 45 <span class="z">0</span><span class="z">0</span></div>
<div class="m hx" style="left:2046px;top:742.50px;color:#000">Tq··e··· ··ne··E·</div>
<div class="m hx" style="left:1270px;top:768.60px;color:#9a9a9a"><span class="z">0</span><span class="z">0</span>1<span class="z">0</span></div>
<div class="m hx" style="left:1351px;top:768.60px;color:#000"><span class="z">0</span><span class="z">0</span> 34 <span class="z">0</span><span class="z">0</span> <span class="z">0</span><span class="z">0</span> 4<span class="z">0</span> <span class="z">0</span><span class="z">0</span> 4<span class="z">0</span> <span class="z">0</span>6  52 b6 c<span class="z">0</span> a8 <span class="z">0</span>3 42 b9 c8</div>
<div class="m hx" style="left:2046px;top:768.60px;color:#000">·4··@·@· R····B··</div>
<div class="m hx" style="left:1270px;top:794.70px;color:#9a9a9a"><span class="z">0</span><span class="z">0</span>2<span class="z">0</span></div>
<div class="m hx" style="left:1351px;top:794.70px;color:#000">6a 5b d4 <span class="z">0</span><span class="z">0</span> <span class="z">0</span>1 bb f1 d7  39 91 <span class="z">0</span>6 88 4d d3 8<span class="z">0</span> 1<span class="z">0</span></div>
<div class="m hx" style="left:2046px;top:794.70px;color:#000">j[······ 9···M···</div>
<div class="m hx" style="left:1270px;top:820.80px;color:#9a9a9a"><span class="z">0</span><span class="z">0</span>3<span class="z">0</span></div>
<div class="m hx" style="left:1351px;top:820.80px;color:#000"><span class="z">0</span>7 fc 1b 8e <span class="z">0</span><span class="z">0</span> <span class="z">0</span><span class="z">0</span> <span class="z">0</span>1 <span class="z">0</span>1  <span class="z">0</span>8 <span class="z">0</span>a 45 dd ec <span class="z">0</span>1 6d e5</div>
<div class="m hx" style="left:2046px;top:820.80px;color:#000">········ ··E···m·</div>
<div class="m hx" style="left:1270px;top:846.90px;color:#9a9a9a"><span class="z">0</span><span class="z">0</span>4<span class="z">0</span></div>
<div class="m hx" style="left:1351px;top:846.90px;color:#000">75 e<span class="z">0</span></div>
<div class="m hx" style="left:2046px;top:846.90px;color:#000">u·</div>
<div class="a" style="left:0;top:1307px;width:2500px;height:42px;background:linear-gradient(#e6e6e6,#b8b8b8)"></div>
<div class="a" style="left:0;top:1306.8px;width:2500px;height:1px;background:#b6b6b6"></div>
<div class="a" style="left:0;top:1307.8px;width:2500px;height:0.7px;background:#c8c8c8"></div>
<div class="a" style="left:0;top:1308.5px;width:2500px;height:1.4px;background:#8c8c8c"></div>
<div class="a" style="left:0;top:1309.9px;width:2500px;height:1px;background:#ececec"></div>
<div class="a" style="left:12.4px;top:1319.6px;width:23.8px;height:24px;border-radius:50%;background:radial-gradient(circle at 50% 35%,#ecec9a,#d9d655);border:2px solid #6e6e2e"></div>
<svg class="a" style="left:55px;top:1317px" width="30" height="30"><rect x="2.2" y="3" width="18" height="23.6" fill="#f3f3ea" stroke="#a8a8a0" stroke-width="0.8"/><rect x="2.6" y="3.4" width="17.2" height="5.2" fill="#4aa0e0"/><path d="M6.5 8.6 C7.5 6 9 4.8 11 4.6 C10 6 10 7.3 10.6 8.6 Z" fill="#fff"/><path d="M5 13 H17 M5 17.5 H17 M5 22 H17" stroke="#c8c8c0" stroke-width="1.6"/><path d="M10.5 18 L22.5 5.8 Q24 4.5 25.5 6 L26 6.5 Q27.3 8 26 9.3 L14 21.5 Z" fill="#555"/><path d="M10.5 18 L14 21.5 L8 23.6 Z" fill="#111"/></svg>
<div class="a" style="left:115px;top:1319px;font-size:19px;letter-spacing:0.82px;line-height:28px;color:#000;white-space:pre">wireshark_Wi-FiBOT6B3.pcapng</div>
<div class="a" style="left:1496px;top:1328px;width:10px;height:10px;border-radius:50%;background:#bcbcbc"></div>
<div class="a" style="left:1527px;top:1319px;font-size:19px;letter-spacing:0.82px;line-height:28px;color:#000;white-space:pre">Пакеты: 143 · Потеряно: 0 (0.0%)</div>
<div class="a" style="left:2303px;top:1328px;width:10px;height:10px;border-radius:50%;background:#bcbcbc"></div>
<div class="a" style="left:2334.5px;top:1319px;font-size:19px;letter-spacing:0.82px;line-height:28px;color:#000;white-space:pre">Профиль: Default</div>
</body></html>
